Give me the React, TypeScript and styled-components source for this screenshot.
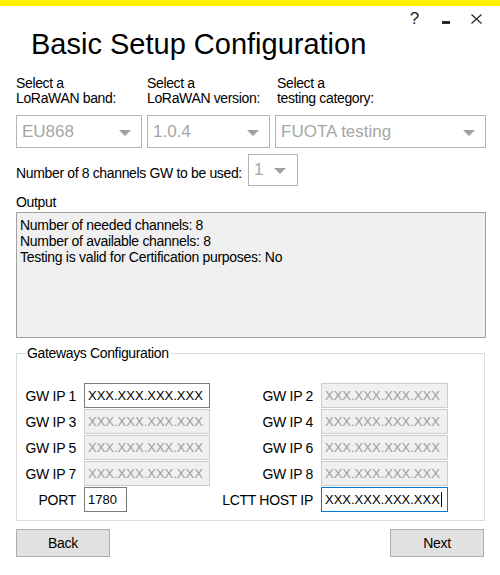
import React from "react";
import styled, { createGlobalStyle } from "styled-components";

const GlobalStyle = createGlobalStyle`
  html, body {
    margin: 0;
    padding: 0;
    background: #ffffff;
  }
  body {
    font-family: "Liberation Sans", Arial, sans-serif;
    color: #000;
  }
  * { box-sizing: border-box; }
`;

const Page = styled.div`
  width: 500px;
  height: 575px;
  overflow: hidden;
  background: #ffffff;
  display: flex;
  flex-direction: column;
`;

const YellowBar = styled.div`
  height: 6px;
  flex: 0 0 6px;
  background: #fff000;
`;

const Header = styled.header`
  height: 70px;
  flex: 0 0 70px;
  display: flex;
  justify-content: space-between;
  align-items: flex-start;
  padding: 0 8px 0 31px;
`;

const Title = styled.h1`
  margin: 21px 0 0 0;
  font-size: 29px;
  line-height: 34px;
  font-weight: normal;
  letter-spacing: 0;
  color: #000;
  white-space: nowrap;
`;

const WindowControls = styled.div`
  display: flex;
  margin-top: 3px;
`;

const Ctrl = styled.div`
  width: 31px;
  height: 20px;
  display: flex;
  align-items: center;
  justify-content: center;
  font-size: 17px;
  line-height: 20px;
  color: #222;
`;

const MinBar = styled.div`
  width: 8px;
  height: 3px;
  margin-top: 7px;
  background: #2a2a2a;
`;

const Body = styled.main`
  display: flex;
  flex-direction: column;
  padding: 0 14px 0 16px;
`;

const SelectGrid = styled.div`
  display: grid;
  grid-template-columns: 126px 123px 211px;
  column-gap: 5px;
`;

const Field = styled.div`
  display: flex;
  flex-direction: column;
`;

const Label = styled.div<{ $indent?: number }>`
  font-size: 14px;
  line-height: 15px;
  letter-spacing: -0.35px;
  height: 30px;
  padding-left: ${(p) => p.$indent ?? 0}px;
  white-space: nowrap;
`;

const Combo = styled.div<{ $width?: number; $height?: number; $pad?: number; $right?: number }>`
  width: ${(p) => (p.$width ? `${p.$width}px` : "auto")};
  height: ${(p) => p.$height ?? 33}px;
  border: 1px solid #b4b4b4;
  background: #fff;
  display: flex;
  align-items: center;
  justify-content: space-between;
  padding: 0 ${(p) => p.$right ?? 10}px 0 ${(p) => p.$pad ?? 5}px;
  font-size: 17px;
  color: #a6a6a6;
`;

const ComboSpacer = styled.div`
  height: 9px;
`;

const Arrow = () => (
  <svg width="12" height="6" viewBox="0 0 12 6" style={{ marginTop: 2 }}>
    <path d="M0 0 L12 0 L6 6 Z" fill="#a0a0a0" />
  </svg>
);

const ChannelsRow = styled.div`
  display: flex;
  align-items: center;
  gap: 6px;
  margin-top: 6px;
  height: 32px;
`;

const ChannelsText = styled.span`
  font-size: 14px;
  line-height: 15px;
  letter-spacing: -0.35px;
  margin-top: 6px;
  white-space: nowrap;
`;

const SectionLabel = styled.div`
  margin-top: 9px;
  font-size: 14px;
  line-height: 15px;
  letter-spacing: -0.35px;
`;

const OutputBox = styled.div`
  margin-top: 2px;
  width: 470px;
  height: 126px;
  border: 1px solid #a0a0a0;
  background: #f0f0f0;
  padding: 4px 3px;
  font-size: 14px;
  line-height: 16px;
  letter-spacing: -0.3px;
`;

const OutputLine = styled.div`
  white-space: nowrap;
`;

const GroupBox = styled.fieldset`
  margin: 7px 0 0 0;
  padding: 0;
  width: 469px;
  min-width: 0;
  border: 1px solid #dcdcdc;
`;

const Legend = styled.legend`
  margin-left: 9px;
  padding: 0 1px;
  font-size: 14px;
  line-height: 16px;
  letter-spacing: -0.35px;
`;

const GatewayGrid = styled.div`
  display: grid;
  grid-template-columns: 67px 126px 111px 127px;
  grid-auto-rows: 25px;
  row-gap: 1px;
  padding: 22px 0 8px 0;
`;

const GwLabel = styled.div`
  display: flex;
  align-items: center;
  justify-content: flex-end;
  padding-right: 8px;
  font-size: 14px;
  letter-spacing: -0.3px;
  white-space: nowrap;
`;

type FieldState = "enabled" | "disabled" | "focused";

const IpField = styled.div<{ $state: FieldState; $width?: number }>`
  width: ${(p) => (p.$width ? `${p.$width}px` : "100%")};
  height: 25px;
  display: flex;
  align-items: center;
  padding-left: 3px;
  font-size: 13px;
  white-space: nowrap;
  overflow: hidden;
  border: 1px solid
    ${(p) =>
      p.$state === "focused" ? "#0078d7" : p.$state === "enabled" ? "#7a7a7a" : "#cccccc"};
  background: ${(p) => (p.$state === "disabled" ? "#f0f0f0" : "#ffffff")};
  color: ${(p) => (p.$state === "disabled" ? "#9d9d9d" : "#000000")};
`;

const Caret = styled.span`
  display: inline-block;
  width: 1px;
  height: 15px;
  background: #000;
  margin-left: 1px;
`;

const ButtonRow = styled.div`
  display: flex;
  justify-content: space-between;
  margin-top: 8px;
  padding-right: 2px;
`;

const Button = styled.button`
  width: 94px;
  height: 28px;
  padding: 0;
  font-family: "Liberation Sans", Arial, sans-serif;
  font-size: 14px;
  letter-spacing: -0.3px;
  color: #000;
  background: #e1e1e1;
  border: 1px solid #adadad;
`;

const IP = "XXX.XXX.XXX.XXX";

const selects = [
  { l1: "Select a", l2: "LoRaWAN band:", value: "EU868", indent: 0 },
  { l1: "Select a", l2: "LoRaWAN version:", value: "1.0.4", indent: 0 },
  { l1: "Select a", l2: "testing category:", value: "FUOTA testing", indent: 2 },
];

const gwRows: [string, FieldState, string, FieldState][] = [
  ["GW IP 1", "enabled", "GW IP 2", "disabled"],
  ["GW IP 3", "disabled", "GW IP 4", "disabled"],
  ["GW IP 5", "disabled", "GW IP 6", "disabled"],
  ["GW IP 7", "disabled", "GW IP 8", "disabled"],
];

export default function App() {
  return (
    <>
      <GlobalStyle />
      <Page>
        <YellowBar />
        <Header>
          <Title>Basic Setup Configuration</Title>
          <WindowControls>
            <Ctrl>?</Ctrl>
            <Ctrl>
              <MinBar />
            </Ctrl>
            <Ctrl>
              <svg width="11" height="10" viewBox="0 0 11 10">
                <path d="M0.5 0.5 L10.5 9.5 M10.5 0.5 L0.5 9.5" stroke="#2a2a2a" strokeWidth="1.3" />
              </svg>
            </Ctrl>
          </WindowControls>
        </Header>
        <Body>
          <SelectGrid>
            {selects.map((s) => (
              <Field key={s.l2}>
                <Label $indent={s.indent}>
                  {s.l1}
                  <br />
                  {s.l2}
                </Label>
                <ComboSpacer />
                <Combo>
                  <span>{s.value}</span>
                  <Arrow />
                </Combo>
              </Field>
            ))}
          </SelectGrid>
          <ChannelsRow>
            <ChannelsText>Number of 8 channels GW to be used:</ChannelsText>
            <Combo $width={50} $height={32} $pad={5} $right={11}>
              <span>1</span>
              <Arrow />
            </Combo>
          </ChannelsRow>
          <SectionLabel>Output</SectionLabel>
          <OutputBox>
            <OutputLine>Number of needed channels: 8</OutputLine>
            <OutputLine>Number of available channels: 8</OutputLine>
            <OutputLine>Testing is valid for Certification purposes: No</OutputLine>
          </OutputBox>
          <GroupBox>
            <Legend>Gateways Configuration</Legend>
            <GatewayGrid>
              {gwRows.map(([l1, s1, l2, s2]) => (
                <React.Fragment key={l1}>
                  <GwLabel>{l1}</GwLabel>
                  <IpField $state={s1}>{IP}</IpField>
                  <GwLabel>{l2}</GwLabel>
                  <IpField $state={s2}>{IP}</IpField>
                </React.Fragment>
              ))}
              <GwLabel>PORT</GwLabel>
              <IpField $state="enabled" $width={43}>
                1780
              </IpField>
              <GwLabel>LCTT HOST IP</GwLabel>
              <IpField $state="focused">
                {IP}
                <Caret />
              </IpField>
            </GatewayGrid>
          </GroupBox>
          <ButtonRow>
            <Button>Back</Button>
            <Button>Next</Button>
          </ButtonRow>
        </Body>
      </Page>
    </>
  );
}
